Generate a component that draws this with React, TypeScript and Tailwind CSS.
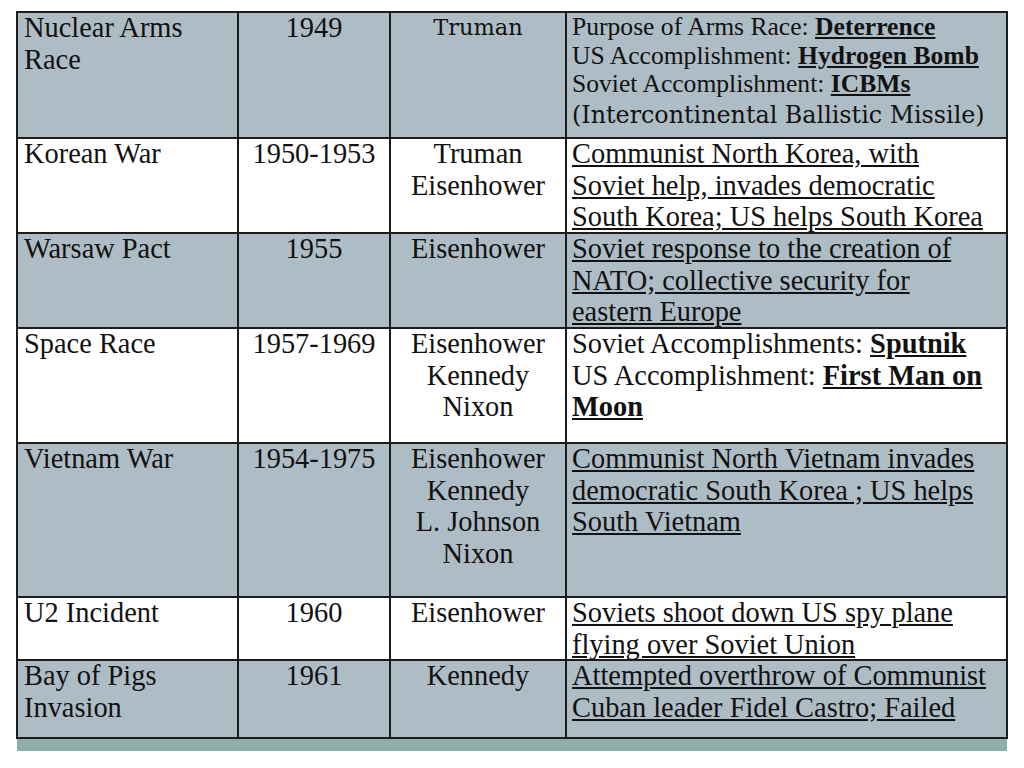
import React from 'react';

type Row = {
  event: React.ReactNode;
  year: string;
  presidents: React.ReactNode;
  notes: React.ReactNode;
  shaded?: boolean;
  height: string;
  notesClass: string;
  presClass?: string;
};

const rows: Row[] = [
  {
    event: (
      <>
        Nuclear Arms
        <br />
        Race
      </>
    ),
    year: '1949',
    presidents: 'Truman',
    presClass: "font-['DejaVu_Serif',serif] text-[22.5px] leading-[30px]",
    notesClass: 'text-[25.6px] leading-[28.5px] mt-[0px]',
    notes: (
      <>
        Purpose of Arms Race: <b className="underline">Deterrence</b>
        <br />
        US Accomplishment: <b className="underline">Hydrogen Bomb</b>
        <br />
        Soviet Accomplishment: <b className="underline">ICBMs</b>
        <br />
        <span className="font-['DejaVu_Serif',serif] text-[23.8px] leading-[32px]">
          (Intercontinental Ballistic Missile)
        </span>
      </>
    ),
    shaded: true,
    height: 'h-[126px]',
  },
  {
    event: 'Korean War',
    year: '1950-1953',
    presidents: (
      <>
        Truman
        <br />
        Eisenhower
      </>
    ),
    notesClass: 'underline -mt-[1px]',
    notes: (
      <>
        Communist North Korea, with
        <br />
        Soviet help, invades democratic
        <br />
        South Korea; US helps South Korea
      </>
    ),
    height: 'h-[95px]',
  },
  {
    event: 'Warsaw Pact',
    year: '1955',
    presidents: 'Eisenhower',
    notesClass: 'underline -mt-[1px]',
    notes: (
      <>
        Soviet response to the creation of
        <br />
        NATO; collective security for
        <br />
        eastern Europe
      </>
    ),
    shaded: true,
    height: 'h-[95px]',
  },
  {
    event: 'Space Race',
    year: '1957-1969',
    presidents: (
      <>
        Eisenhower
        <br />
        Kennedy
        <br />
        Nixon
      </>
    ),
    notesClass: '-mt-[1px]',
    notes: (
      <>
        Soviet Accomplishments: <b className="underline">Sputnik</b>
        <br />
        US Accomplishment: <b className="underline">First Man on</b>
        <br />
        <b className="underline">Moon</b>
      </>
    ),
    height: 'h-[115px]',
  },
  {
    event: 'Vietnam War',
    year: '1954-1975',
    presidents: (
      <>
        Eisenhower
        <br />
        Kennedy
        <br />
        L. Johnson
        <br />
        Nixon
      </>
    ),
    notesClass: 'underline -mt-[1px]',
    notes: (
      <>
        Communist North Vietnam invades
        <br />
        democratic South Korea ; US helps
        <br />
        South Vietnam
      </>
    ),
    shaded: true,
    height: 'h-[154px]',
  },
  {
    event: 'U2 Incident',
    year: '1960',
    presidents: 'Eisenhower',
    notesClass: 'underline -mt-[1px]',
    notes: (
      <>
        Soviets shoot down US spy plane
        <br />
        flying over Soviet Union
      </>
    ),
    height: 'h-[63px]',
  },
  {
    event: (
      <>
        Bay of Pigs
        <br />
        Invasion
      </>
    ),
    year: '1961',
    presidents: 'Kennedy',
    notesClass: 'underline -mt-[1px]',
    notes: (
      <>
        Attempted overthrow of Communist
        <br />
        Cuban leader Fidel Castro; Failed
      </>
    ),
    shaded: true,
    height: 'h-[78px]',
  },
];

export default function App() {
  return (
    <div className="min-h-[768px] w-[1024px] bg-white pt-[11px] pl-[16px] font-['Liberation_Serif',serif] text-[28.4px] leading-[31.5px] text-[#111]">
      <div className="w-[992px] border-t-2 border-l-2 border-r-2 border-[#1c1c1c]">
        {rows.map((r, i) => (
          <div
            key={i}
            className={`grid grid-cols-[221px_152px_176px_1fr] border-b-2 border-[#1c1c1c] ${r.height} ${
              r.shaded ? 'bg-[#aebdc5]' : 'bg-white'
            }`}
          >
            <div className="border-r-2 border-[#1c1c1c] pl-[6px] -mt-[1px] whitespace-nowrap">{r.event}</div>
            <div className="border-r-2 border-[#1c1c1c] text-center -mt-[1px] whitespace-nowrap">{r.year}</div>
            <div className={`border-r-2 border-[#1c1c1c] text-center -mt-[1px] whitespace-nowrap ${r.presClass ?? ''}`}>
              {r.presidents}
            </div>
            <div className={`pl-[5px] whitespace-nowrap ${r.notesClass}`}>{r.notes}</div>
          </div>
        ))}
      </div>
      <div className="ml-[1px] h-[12px] w-[990px] bg-[#8fafab]" />
    </div>
  );
}
